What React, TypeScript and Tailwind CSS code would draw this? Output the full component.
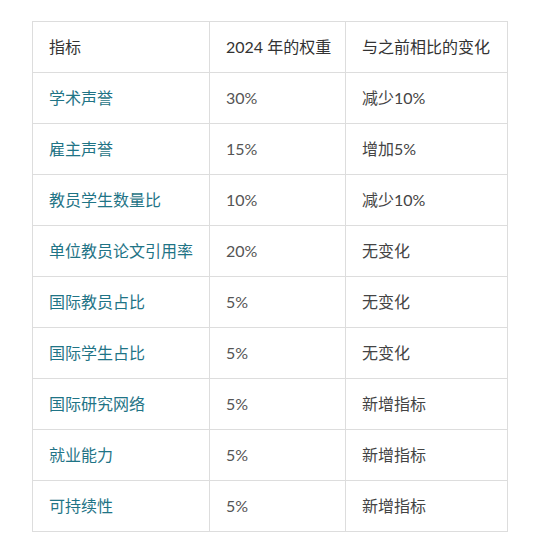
const rows: [string, string, string][] = [
  ["学术声誉", "30%", "减少10%"],
  ["雇主声誉", "15%", "增加5%"],
  ["教员学生数量比", "10%", "减少10%"],
  ["单位教员论文引用率", "20%", "无变化"],
  ["国际教员占比", "5%", "无变化"],
  ["国际学生占比", "5%", "无变化"],
  ["国际研究网络", "5%", "新增指标"],
  ["就业能力", "5%", "新增指标"],
  ["可持续性", "5%", "新增指标"],
];

const font = {
  fontFamily: 'Lato, "Noto Sans CJK SC", sans-serif',
};

export default function App() {
  return (
    <div className="min-h-[551px] bg-white pt-[21px] pl-[32px]" style={font}>
      <table className="table-fixed border-collapse w-[475px] text-[16px] leading-[18px] whitespace-nowrap">
        <colgroup>
          <col className="w-[177px]" />
          <col className="w-[136px]" />
          <col className="w-[162px]" />
        </colgroup>
        <thead>
          <tr className="text-[#333]">
            <td className="border border-[#ddd] px-4 py-4 h-[51px]">指标</td>
            <td className="border border-[#ddd] px-4 py-4 h-[51px]">2024 年的权重</td>
            <td className="border border-[#ddd] px-4 py-4 h-[51px]">与之前相比的变化</td>
          </tr>
        </thead>
        <tbody>
          {rows.map(([name, weight, change]) => (
            <tr key={name}>
              <td className="border border-[#ddd] px-4 py-4 h-[51px] text-[#1f7486]">{name}</td>
              <td className="border border-[#ddd] px-4 py-4 h-[51px] text-[#555]">{weight}</td>
              <td className="border border-[#ddd] px-4 py-4 h-[51px] text-[#444]">{change}</td>
            </tr>
          ))}
        </tbody>
      </table>
    </div>
  );
}
